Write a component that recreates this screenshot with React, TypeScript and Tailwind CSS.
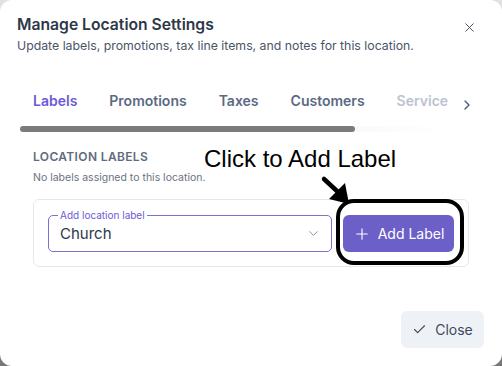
import { X, ChevronRight, ChevronDown, Plus, Check } from "lucide-react";

const tabs = ["Labels", "Promotions", "Taxes", "Customers", "Service"];

export default function App() {
  return (
    <div className="w-[502px] h-[366px] bg-gradient-to-b from-[#e2e2e2] to-[#777777] font-['Inter',sans-serif]">
      <div className="relative h-full bg-white rounded-[12px] flex flex-col">
        <div className="flex justify-between items-start pl-[17px] pr-[25px] pt-[14px]">
          <div>
            <h2 className="text-[15.7px] leading-[22px] font-semibold text-[#2d3748]">Manage Location Settings</h2>
            <p className="mt-[1px] text-[12.3px] leading-[18px] text-[#4a5568]">
              Update labels, promotions, tax line items, and notes for this location.
            </p>
          </div>
          <button aria-label="Close" className="mt-[6px] text-[#4a5568]">
            <X className="h-[15px] w-[15px]" strokeWidth={1.6} />
          </button>
        </div>

        <div className="mt-[31px] flex items-center pl-[17px] pr-[27px]">
          <div className="flex-1 overflow-hidden">
            <div className="flex h-[28px] items-center">
              {tabs.map((t, i) => (
                <span
                  key={t}
                  className={
                    "px-4 text-[14px] font-semibold whitespace-nowrap " +
                    (i === 0 ? "text-[#6c5ad6]" : i === 4 ? "text-[#bcc3cf]" : "text-[#5b6a84]")
                  }
                >
                  {t}
                </span>
              ))}
            </div>
          </div>
          <ChevronRight className="h-[16px] w-[16px] mt-[10px] text-[#4a5a78]" strokeWidth={2} />
        </div>

        <div className="mt-[12px] ml-[20px] w-[428px] h-[6px] rounded-full bg-gradient-to-r from-[#f1f1f1] via-[#f3f3f3] to-white">
          <div className="h-full w-[335px] rounded-full bg-[#7b7b7b]" />
        </div>

        <div className="px-[33px] mt-[17px]">
          <div className="text-[12px] leading-[16px] font-semibold tracking-[0.03em] text-[#5f6b7e]">LOCATION LABELS</div>
          <div className="mt-[6px] text-[10.5px] leading-[14px] text-[#6b7280]">No labels assigned to this location.</div>

          <div className="mt-[14px] flex items-center gap-[11px] border border-[#e3e7ef] rounded-[6px] px-[14px] pt-[15px] pb-[14px]">
            <div className="relative flex-1 h-[37px] border border-[#7d6fd4] rounded-[5px] flex items-center justify-between pl-[11px] pr-[10px]">
              <span className="absolute -top-[8px] left-[9px] bg-white px-[2px] text-[10px] leading-[14px] text-[#6c5ad6]">
                Add location label
              </span>
              <span className="mt-[2px] text-[15px] text-[#2d3748]">Church</span>
              <ChevronDown className="h-[15px] w-[15px] text-[#8a94a6]" strokeWidth={1.6} />
            </div>
            <button className="h-[37px] w-[111px] bg-[#6c5fc7] rounded-[6px] flex items-center justify-center gap-[7px] text-white text-[14px]">
              <Plus className="h-[18px] w-[18px]" strokeWidth={1.5} />
              Add Label
            </button>
          </div>
        </div>

        <div className="mt-auto flex justify-end pr-[18px] pb-[18px]">
          <button className="h-[37px] w-[83px] bg-[#eef2f7] rounded-[6px] flex items-center justify-center gap-[8px] text-[#3f4a5c] text-[14px]">
            <Check className="h-[15px] w-[15px]" strokeWidth={1.8} />
            Close
          </button>
        </div>

        {/* annotation overlay */}
        <div className="absolute left-[204px] top-[145px] text-[24px] leading-[28px] text-black font-['Liberation_Sans',Arial,sans-serif]">
          Click to Add Label
        </div>
        <div className="absolute left-[336px] top-[199px] w-[128px] h-[66px] border-[4px] border-black rounded-[18px]" />
        <svg className="absolute left-[318px] top-[174px]" width="36" height="34" viewBox="0 0 36 34">
          <line x1="6" y1="5" x2="20" y2="18" stroke="black" strokeWidth="4.5" strokeLinecap="round" />
          <polygon points="31,30 11,25 27,9" fill="black" />
        </svg>
      </div>
    </div>
  );
}
